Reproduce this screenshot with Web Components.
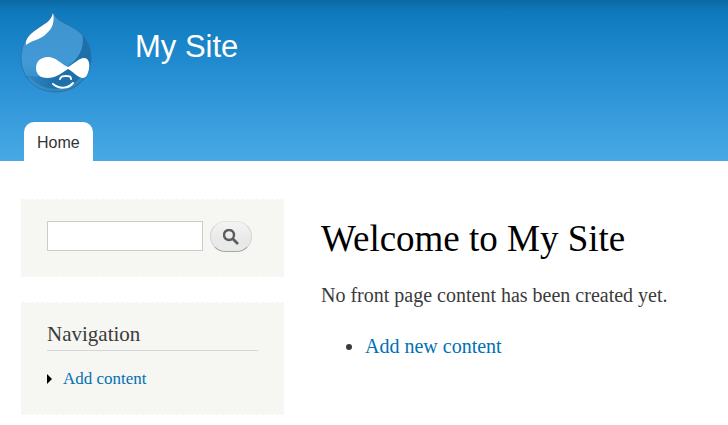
<!DOCTYPE html>
<html lang="en">
<head>
<meta charset="UTF-8">
<meta name="viewport" content="width=device-width, initial-scale=1">
<title>My Site</title>
<style>
    :root {
        --block-bg: #f6f6f2;
        --link-color: #0071b3;
        --text-color: #3b3b3b;
        --sans: "Liberation Sans", Arial, sans-serif;
    }
    body {
        margin: 0;
        background: #fff;
        color: var(--text-color);
        font-family: "Liberation Serif", Georgia, serif;
    }
    .columns {
        display: grid;
        grid-template-columns: 263px minmax(0, 1fr);
        column-gap: 37px;
        padding: 38px 21px 12px;
    }
    .sidebar {
        display: flex;
        flex-direction: column;
        gap: 25px;
    }
</style>
</head>
<body>
    <site-header site-name="My Site">
        <site-logo slot="logo"></site-logo>
        <menu-tab slot="menu" href="#home">Home</menu-tab>
    </site-header>
    <div class="columns">
        <aside class="sidebar">
            <side-block>
                <search-form></search-form>
            </side-block>
            <side-block heading="Navigation">
                <nav-item href="#add-content">Add content</nav-item>
            </side-block>
        </aside>
        <front-page heading="Welcome to My Site" link="Add new content" href="#add-new">No front page content has been created yet.</front-page>
    </div>

<script>
// Blue banner with the logo, the site name and the main menu
class SiteHeader extends HTMLElement {
    constructor() {
        super();
        this.attachShadow({ mode: 'open' });
    }

    connectedCallback() {
        this.shadowRoot.innerHTML = `
            <style>
                :host {
                    display: block;
                    background: linear-gradient(#0b69a3 0, #0f78b9 10px, #1581c5 32px, #2990d5 80px, #48a9e4 100%);
                }
                .branding {
                    display: flex;
                    align-items: flex-start;
                    gap: 43px;
                    padding: 12px 20px 0;
                }
                .name {
                    margin-top: 17px;
                    color: #fff;
                    font: 31px/36px var(--sans);
                    text-decoration: none;
                }
                nav {
                    display: flex;
                    gap: 4px;
                    padding: 28px 24px 0;
                }
            </style>
            <header>
                <div class="branding">
                    <slot name="logo"></slot>
                    <a class="name" href="#home">${this.getAttribute('site-name')}</a>
                </div>
                <nav><slot name="menu"></slot></nav>
            </header>
        `;
    }
}
customElements.define('site-header', SiteHeader);

class SiteLogo extends HTMLElement {
    constructor() {
        super();
        this.attachShadow({ mode: 'open' });
    }

    connectedCallback() {
        this.shadowRoot.innerHTML = `
            <style>
                :host { display: block; }
                svg { display: block; }
            </style>
            <svg width="72" height="82" viewBox="0 0 72 82" role="img" aria-label="Home">
                <defs>
                    <linearGradient id="drop" x1="0" y1="0" x2="0" y2="1">
                        <stop offset="0" stop-color="#3f93cd"/>
                        <stop offset=".6" stop-color="#4199d5"/>
                        <stop offset="1" stop-color="#3289c6"/>
                    </linearGradient>
                    <linearGradient id="shade" x1="0" y1="0" x2="1" y2="0">
                        <stop offset=".1" stop-color="#2e86c1"/>
                        <stop offset=".5" stop-color="#1d70aa"/>
                    </linearGradient>
                    <clipPath id="body">
                        <path d="M33 0C36 8 43 10 52 15C65 22 71 33 71 46C71 66 55 80 36 80C16 80 1 66 1 46C1 34 6 25 15 18C23 12 31 10 33 0Z"/>
                    </clipPath>
                </defs>
                <g clip-path="url(#body)">
                    <path fill="url(#drop)" d="M0 0H72V82H0Z"/>
                    <path fill="url(#shade)" d="M62 20C66 37 57 50 43 57C29 65 14 67 0 62L8 82H72V20Z"/>
                    <path fill="none" stroke="#4a9bd2" stroke-width="3" stroke-opacity=".5" d="M8 66C22 82 48 83 63 65"/>
                </g>
                <path fill="none" stroke="#286c9d" stroke-opacity=".7" stroke-linejoin="round" d="M33 0C36 8 43 10 52 15C65 22 71 33 71 46C71 66 55 80 36 80C16 80 1 66 1 46C1 34 6 25 15 18C23 12 31 10 33 0Z"/>
                <path fill="#fff" d="M33 1C35 10 32 17 27 21C21 28 14 27 6 33C5 27 10 22 16 18C24 12 31 10 33 1Z"/>
                <path fill="#fff" d="M28 45C36 45 41 52 48 55C54 52 59 46 64 46C69 46 70 52 69 57C68 62 66 66 63 66C58 66 54 60 48 57C42 61 36 66 27 66C20 66 16 62 16 56C16 50 20 45 28 45Z"/>
                <path fill="none" stroke="#fff" stroke-width="2" stroke-linecap="round" d="M40 67C41 64 43 64 46 64C49 64 51 64 51 67"/>
                <path fill="none" stroke="#fff" stroke-width="2" stroke-linecap="round" d="M33 72C39 77 48 77 53 71"/>
            </svg>
        `;
    }
}
customElements.define('site-logo', SiteLogo);

class MenuTab extends HTMLElement {
    constructor() {
        super();
        this.attachShadow({ mode: 'open' });
    }

    connectedCallback() {
        this.shadowRoot.innerHTML = `
            <style>
                :host { display: block; }
                a {
                    display: block;
                    padding: 11px 13px 8px;
                    border-radius: 10px 10px 0 0;
                    background: #fff;
                    color: #333;
                    font: 16px/20px var(--sans);
                    text-decoration: none;
                }
            </style>
            <a href="${this.getAttribute('href')}"><slot></slot></a>
        `;
    }
}
customElements.define('menu-tab', MenuTab);

// Sidebar box, the heading is optional
class SideBlock extends HTMLElement {
    constructor() {
        super();
        this.attachShadow({ mode: 'open' });
    }

    connectedCallback() {
        const heading = this.getAttribute('heading');
        this.shadowRoot.innerHTML = `
            <style>
                :host {
                    display: block;
                    padding: 21px 26px 24px;
                    border: 1px dashed var(--block-bg);
                    border-width: 1px 0;
                    background: var(--block-bg) padding-box;
                }
                h2 {
                    margin: 0 0 17px;
                    padding-bottom: 6px;
                    border-bottom: 1px solid #d6d6d6;
                    font-size: 21px;
                    font-weight: normal;
                    line-height: 20px;
                }
            </style>
            ${heading ? `<h2>${heading}</h2>` : ''}
            <slot></slot>
        `;
    }
}
customElements.define('side-block', SideBlock);

class SearchForm extends HTMLElement {
    constructor() {
        super();
        this.attachShadow({ mode: 'open' });
    }

    connectedCallback() {
        this.shadowRoot.innerHTML = `
            <style>
                :host { display: block; }
                form {
                    display: flex;
                    gap: 7px;
                    padding-right: 6px;
                }
                input {
                    box-sizing: border-box;
                    flex: 1;
                    min-width: 0;
                    height: 30px;
                    padding: 4px;
                    border: 1px solid #ccc;
                    background: #fff;
                    font: 16px var(--sans);
                }
                button {
                    display: flex;
                    align-items: center;
                    justify-content: center;
                    box-sizing: border-box;
                    width: 42px;
                    height: 31px;
                    padding: 0;
                    border: 1px solid #d2d2d2;
                    border-top-color: #e4e4e4;
                    border-bottom-color: #a6a6a6;
                    border-radius: 16px;
                    background: linear-gradient(#f4f4f3, #e8e9e9 60%);
                    cursor: pointer;
                }
            </style>
            <form>
                <input type="search" aria-label="Search">
                <button type="submit" aria-label="Search">
                    <svg width="16" height="16" viewBox="0 0 16 16" fill="none" stroke="#5c5c5c">
                        <circle cx="6" cy="6" r="5" stroke-width="2.4"/>
                        <path d="M9.5 9.5L15 15" stroke-width="2.6"/>
                    </svg>
                </button>
            </form>
        `;

        this.shadowRoot.querySelector('form').addEventListener('submit', (e) => {
            e.preventDefault();
        });
    }
}
customElements.define('search-form', SearchForm);

class NavItem extends HTMLElement {
    constructor() {
        super();
        this.attachShadow({ mode: 'open' });
    }

    connectedCallback() {
        this.shadowRoot.innerHTML = `
            <style>
                :host {
                    display: flex;
                    align-items: center;
                    gap: 11px;
                    font-size: 17px;
                    line-height: 22px;
                }
                a {
                    color: var(--link-color);
                    text-decoration: none;
                }
            </style>
            <svg width="5" height="10" viewBox="0 0 5 10" aria-hidden="true"><path d="M0 0L5 5L0 10Z"/></svg>
            <a href="${this.getAttribute('href')}"><slot></slot></a>
        `;
    }
}
customElements.define('nav-item', NavItem);

// Main column: title, message and the list of actions
class FrontPage extends HTMLElement {
    constructor() {
        super();
        this.attachShadow({ mode: 'open' });
    }

    connectedCallback() {
        this.shadowRoot.innerHTML = `
            <style>
                :host {
                    display: block;
                    padding-top: 18px;
                    font-size: 20px;
                    line-height: 24px;
                }
                h1 {
                    margin: 0;
                    color: #000;
                    font-size: 37px;
                    font-weight: normal;
                    line-height: 44px;
                }
                p {
                    margin: 22px 0 27px;
                }
                ul {
                    margin: 0;
                    padding-left: 44px;
                }
                a {
                    color: var(--link-color);
                    text-decoration: none;
                }
            </style>
            <main>
                <h1>${this.getAttribute('heading')}</h1>
                <p><slot></slot></p>
                <ul>
                    <li><a href="${this.getAttribute('href')}">${this.getAttribute('link')}</a></li>
                </ul>
            </main>
        `;
    }
}
customElements.define('front-page', FrontPage);
</script>
</body>
</html>
